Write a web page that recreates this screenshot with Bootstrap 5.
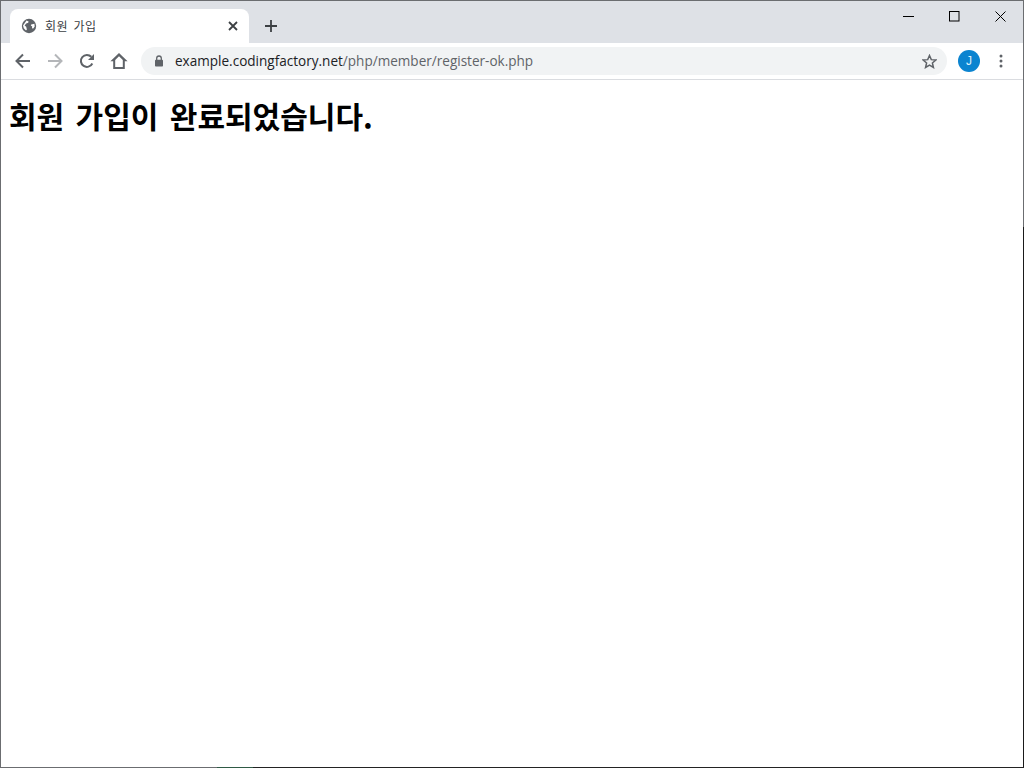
<!DOCTYPE html>
<html lang="ko">
<head>
<meta charset="utf-8">
<title>회원 가입</title>
<link href="https://cdn.jsdelivr.net/npm/bootstrap@5.3.0/dist/css/bootstrap.min.css" rel="stylesheet">
<style>
html,body{height:100%;background:#fff;}
body{overflow:hidden;}
.win-frame{height:768px;border:1px solid #6b6d70;position:relative;background:#fff;}
.win-edge{position:absolute;right:-1px;top:226px;bottom:-1px;width:1px;background:#1a1a1a;}
.win-foot{position:absolute;left:216px;right:-1px;bottom:-1px;height:1px;background:linear-gradient(to right,#2f5a45 0,#2f5a45 36px,#232323 36px,#232323 100%);}
.tab-strip{height:42px;background:#dee1e6;padding-left:9px;}
.tab-shape{width:239px;height:34px;margin-top:8px;background:#fff;border-radius:8px 8px 0 0;padding-left:11px;padding-right:11px;}
.tab-title{font-family:"Noto Sans CJK KR","Liberation Sans",sans-serif;font-size:12px;line-height:16px;color:#3c4043;margin:0 0 1px 8px;letter-spacing:.5px;word-spacing:1.5px;}
.new-tab{margin-left:15px;margin-top:8px;width:14px;}
.win-ctl{width:46px;height:30px;}
.tool-row{height:36px;background:#fff;padding-left:6px;}
.tool-btn{width:32px;height:32px;}
.omni{width:806px;height:28px;border-radius:14px;background:#f1f3f4;margin-left:6px;padding-left:13px;padding-right:10px;}
.omni-url{font-family:"Open Sans","Liberation Sans",sans-serif;font-size:13.55px;color:#202124;margin-left:11px;white-space:nowrap;}
.omni-url span{color:#5f6368;}
.avatar{width:22px;height:22px;border-radius:50%;background:#0b84d0;color:#dff0fb;font:12px "Liberation Sans",sans-serif;margin-left:11px;}
.kebab{margin-left:19px;}
.tool-rule{height:1px;background:#dadce0;}
.page-head{font-family:"Noto Sans CJK KR","Liberation Sans",sans-serif;font-size:30px;font-weight:700;color:#000;margin:17px 0 0 8px;line-height:36px;word-spacing:3px;}
</style>
</head>
<body class="m-0">
<div class="win-frame d-flex flex-column">
  <div class="tab-strip d-flex align-items-start flex-shrink-0">
    <div class="tab-shape d-flex align-items-center">
      <svg width="16" height="16" viewBox="0 0 16 16"><circle cx="8" cy="8" r="7.2" fill="#5f6368"/><path d="M5.5 2.4 7.6 3.4 7.2 4.8 5.2 5.4 3.6 7.6 5.2 8.8 5.9 11.6 5 12.6 2.8 10.3 2 7.4ZM10.2 6.4 13.4 5.8 13.7 8.4 12 10.8 11 10 11.2 8.6 9.8 7.6Z" fill="#fff"/></svg>
      <span class="tab-title flex-grow-1">회원 가입</span>
      <svg width="10" height="10" viewBox="0 0 10 10"><path d="M1 1 9 9M9 1 1 9" stroke="#3c4043" stroke-width="1.8"/></svg>
    </div>
    <svg class="new-tab" width="14" height="34" viewBox="0 0 14 34"><path d="M7 11V23M1 17H13" stroke="#3c4043" stroke-width="1.8"/></svg>
    <div class="ms-auto d-flex">
      <div class="win-ctl d-flex align-items-center justify-content-center"><svg width="11" height="11" viewBox="0 0 11 11"><path d="M0 5.5H11" stroke="#000" stroke-width="1"/></svg></div>
      <div class="win-ctl d-flex align-items-center justify-content-center"><svg width="11" height="11" viewBox="0 0 11 11"><rect x=".5" y=".5" width="9.5" height="9.5" fill="none" stroke="#000"/></svg></div>
      <div class="win-ctl d-flex align-items-center justify-content-center"><svg width="11" height="11" viewBox="0 0 11 11"><path d="M.5.5 10.5 10.5M10.5.5 .5 10.5" stroke="#000" stroke-width="1"/></svg></div>
    </div>
  </div>
  <div class="tool-row d-flex align-items-center flex-shrink-0">
    <div class="tool-btn d-flex align-items-center justify-content-center"><svg width="16" height="16" viewBox="0 0 16 16"><path d="M15 8H2M8 1.5 1.5 8 8 14.5" fill="none" stroke="#5f6368" stroke-width="2"/></svg></div>
    <div class="tool-btn d-flex align-items-center justify-content-center"><svg width="16" height="16" viewBox="0 0 16 16"><path d="M1 8H14M8 1.5 14.5 8 8 14.5" fill="none" stroke="#b4b6b9" stroke-width="2"/></svg></div>
    <div class="tool-btn d-flex align-items-center justify-content-center"><svg width="16" height="16" viewBox="0 0 16 16"><path d="M13.3 10.5A6 6 0 1 1 12.3 3.8" fill="none" stroke="#5f6368" stroke-width="2"/><path d="M15 1V7H9Z" fill="#5f6368"/></svg></div>
    <div class="tool-btn d-flex align-items-center justify-content-center"><svg width="18" height="18" viewBox="0 0 18 18"><path d="M9 1 .4 9.3H3.2V17H14.8V9.3H17.6ZM5.2 15V7.9L9 4.2 12.8 7.9V15Z" fill="#5f6368" fill-rule="evenodd"/></svg></div>
    <div class="omni d-flex align-items-center">
      <svg width="10" height="12" viewBox="0 0 10 12"><path d="M2.7 5V3.3A2.3 2.3 0 0 1 7.3 3.3V5" fill="none" stroke="#5f6368" stroke-width="1.3"/><rect x="1" y="4.8" width="8" height="6.7" rx=".8" fill="#5f6368"/></svg>
      <div class="omni-url flex-grow-1">example.codingfactory.net<span>/php/member/register-ok.php</span></div>
      <svg width="15" height="15" viewBox="0 0 16 16"><path d="M8 1.6 9.9 6 14.8 6.4 11.1 9.6 12.2 14.4 8 11.9 3.8 14.4 4.9 9.6 1.2 6.4 6.1 6Z" fill="none" stroke="#5f6368" stroke-width="1.6"/></svg>
    </div>
    <div class="avatar d-flex align-items-center justify-content-center">J</div>
    <svg class="kebab" width="4" height="16" viewBox="0 0 4 16"><circle cx="2" cy="3" r="1.5" fill="#5f6368"/><circle cx="2" cy="8" r="1.5" fill="#5f6368"/><circle cx="2" cy="13" r="1.5" fill="#5f6368"/></svg>
  </div>
  <div class="tool-rule flex-shrink-0"></div>
  <h1 class="page-head">회원 가입이 완료되었습니다.</h1>
  <div class="win-edge"></div>
  <div class="win-foot"></div>
</div>
<script src="https://cdn.jsdelivr.net/npm/bootstrap@5.3.0/dist/js/bootstrap.bundle.min.js"></script>
</body>
</html>
